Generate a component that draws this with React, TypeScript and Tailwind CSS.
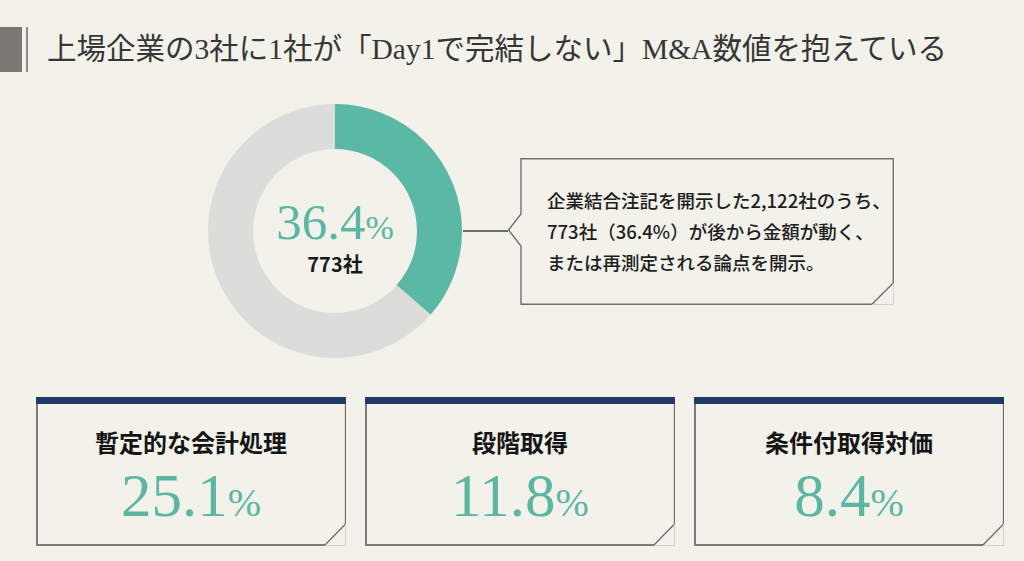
import React from "react";

const SERIF = { fontFamily: '"Liberation Serif","Noto Sans CJK JP",serif' };
const SANS = { fontFamily: '"Noto Sans CJK JP","Noto Sans",sans-serif' };

function Card({ title, value }: { title: string; value: string }) {
  return (
    <div className="relative w-[310px] h-[149px] flex flex-col items-center">
      <svg className="absolute left-0 top-0" width="310" height="149" viewBox="0 0 310 149">
        <path d="M1,7 V148 H289" fill="none" stroke="#7b7b7b" strokeWidth="2" />
        <path d="M289,148 L309.5,127 V7" fill="none" stroke="#6e6e6e" strokeWidth="1.3" />
        <path d="M289,148.5 H309.5 V127" fill="none" stroke="#cfcfcf" strokeWidth="1" />
      </svg>
      <div className="w-full h-[7px] bg-[#1f3a68]" />
      <div className="mt-[22px] text-[24px] leading-[32px] font-bold text-[#151515]" style={SANS}>
        {title}
      </div>
      <div className="mt-[7px] leading-none text-[#5bb7a3]" style={SERIF}>
        <span className="text-[61px]">{value}</span>
        <span className="text-[40px]">%</span>
      </div>
    </div>
  );
}

export default function App() {
  const r = 104.5;
  const c = 2 * Math.PI * r;
  const teal = c * 0.364;
  return (
    <div className="w-[1024px] h-[561px] bg-[#f2f1ea] flex flex-col overflow-hidden">
      <div className="mt-[27px] h-[45px] flex items-center">
        <div className="w-[22px] h-full bg-[#7a7873]" />
        <div className="ml-[4px] w-[2px] h-full bg-[#8c8b87]" />
        <div className="ml-[19px] text-[29.5px] leading-none text-[#363636]" style={SERIF}>
          上場企業の3社に1社が「Day1で完結しない」M&amp;A数値を抱えている
        </div>
      </div>

      <div className="mt-[31px] h-[256px] flex items-center pl-[207px]">
        <div className="relative w-[256px] h-[256px]">
          <svg width="256" height="256" viewBox="0 0 256 256">
            <circle cx="128" cy="128" r={r} fill="none" stroke="#dcdcdb" strokeWidth="45" />
            <circle
              cx="128"
              cy="128"
              r={r}
              fill="none"
              stroke="#5bb8a4"
              strokeWidth="45"
              strokeDasharray={`${teal} ${c}`}
              transform="rotate(-90 128 128)"
            />
          </svg>
          <div className="absolute inset-0 flex flex-col items-center pt-[93px]">
            <div className="h-[52px] flex items-end leading-none text-[#5bb7a3]" style={SERIF}>
              <span className="text-[51px] leading-[52px]">36.4</span>
              <span className="text-[34px] leading-[40px]">%</span>
            </div>
            <div className="mt-[6px] text-[20px] leading-[20px] font-semibold text-[#1a1a1a]" style={SANS}>
              773社
            </div>
          </div>
        </div>
        <div className="w-[45px] h-[1.5px] bg-[#6e6e6e]" />
        <div className="relative w-[386px] h-[147px] flex items-center pl-[39px]">
          <svg className="absolute left-0 top-0" width="386" height="147" viewBox="0 0 386 147">
            <path
              d="M13,0.75 H385.25 V125 L364,146.25 H13 V88 L0.5,72 L13,56 Z"
              fill="none"
              stroke="#707070"
              strokeWidth="1.4"
            />
            <path d="M364,146.5 H385.5 V125" fill="none" stroke="#d0d0d0" strokeWidth="1" />
          </svg>
          <div className="relative text-[18.5px] leading-[31px] font-medium text-[#1e1e1e]" style={SANS}>
            <div>企業結合注記を開示した2,122社のうち、</div>
            <div>773社（36.4%）が後から金額が動く、</div>
            <div>または再測定される論点を開示。</div>
          </div>
        </div>
      </div>

      <div className="mt-[38px] flex gap-[19px] pl-[36px]">
        <Card title="暫定的な会計処理" value="25.1" />
        <Card title="段階取得" value="11.8" />
        <Card title="条件付取得対価" value="8.4" />
      </div>
    </div>
  );
}
